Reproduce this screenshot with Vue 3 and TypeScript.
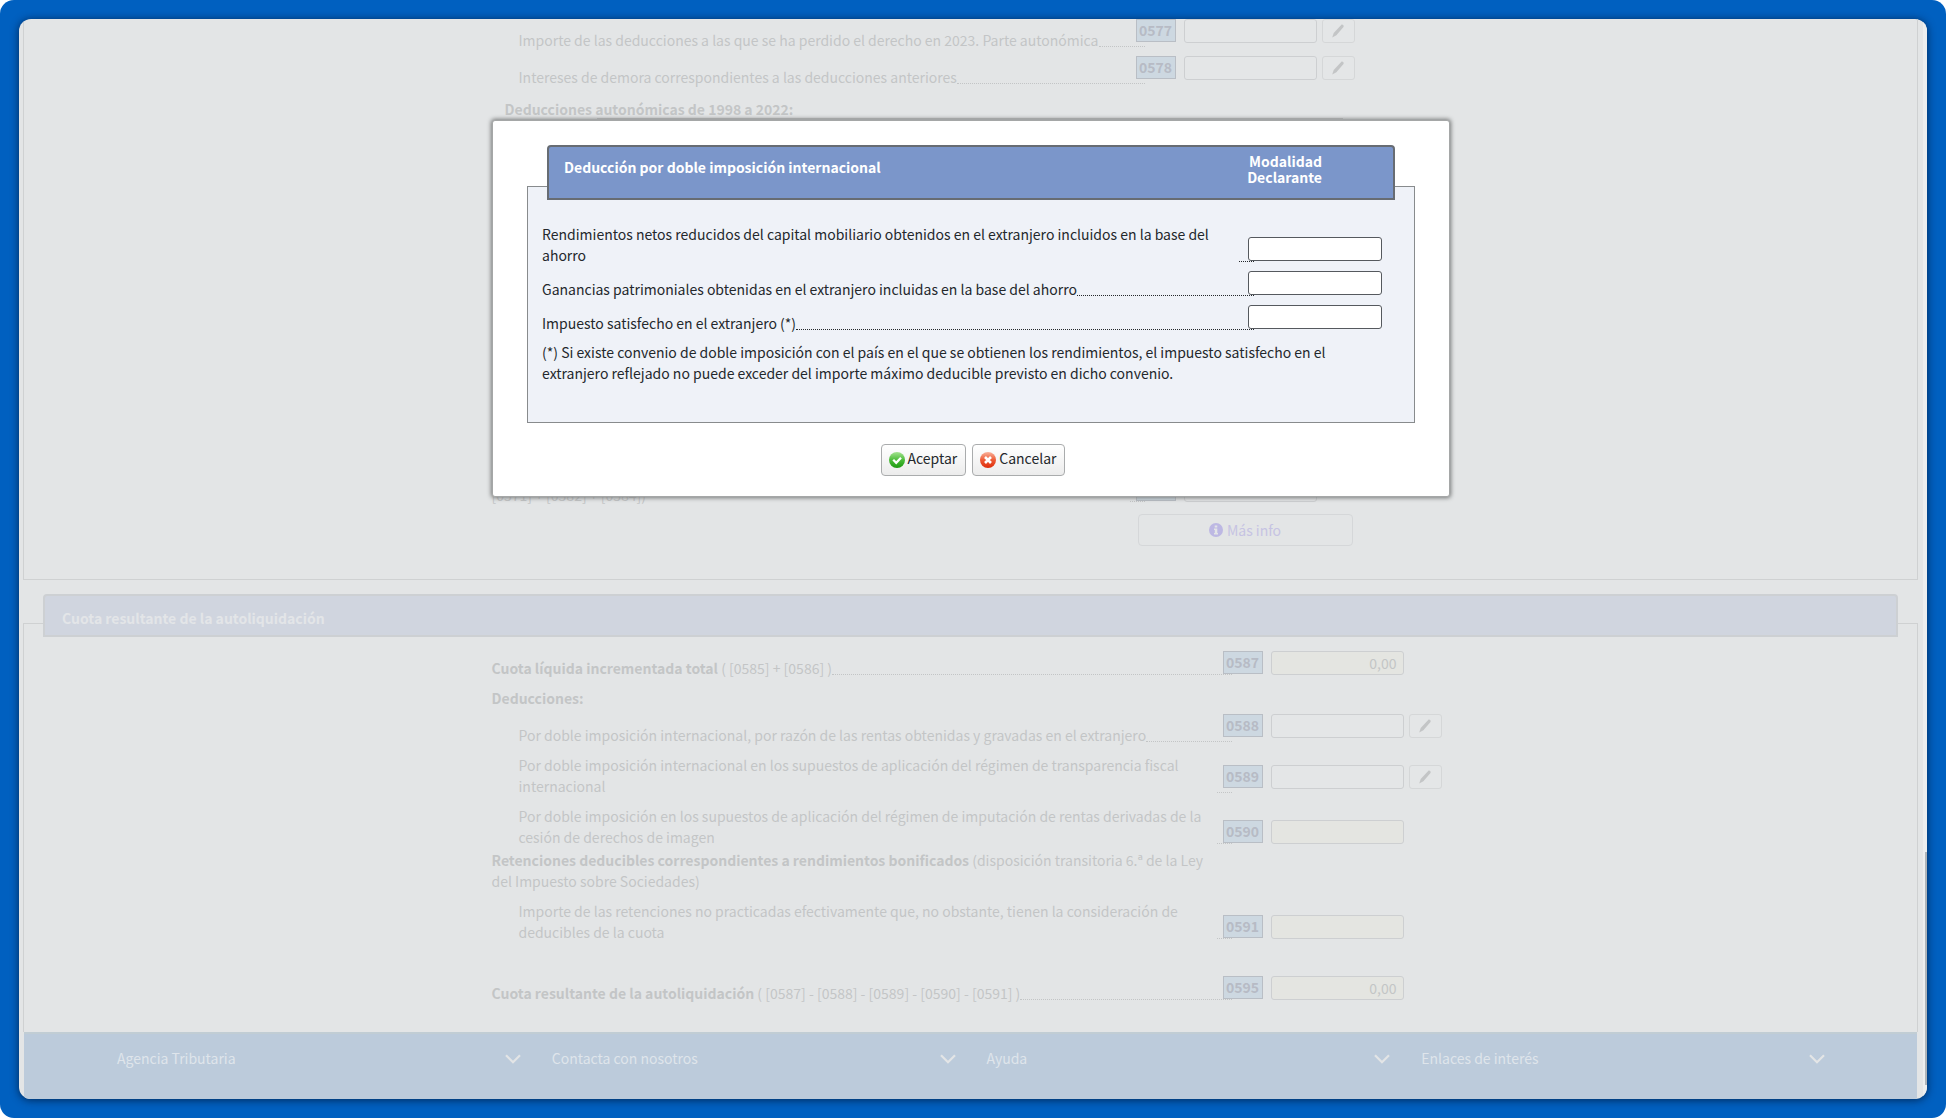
<script setup lang="ts">
import { ref } from 'vue'

interface TaxRow {
  id: string
  strong?: string
  text?: string
  code?: string
  value?: string
  editable?: boolean
  computed?: boolean
  indent?: boolean
  gap: 'none' | 'tight' | 'small' | 'regular' | 'large'
}

const lossRows: TaxRow[] = [
  { id: 'r0577', text: 'Importe de las deducciones a las que se ha perdido el derecho en 2023. Parte autonómica', code: '0577', editable: true, indent: true, gap: 'none' },
  { id: 'r0578', text: 'Intereses de demora correspondientes a las deducciones anteriores', code: '0578', editable: true, indent: true, gap: 'small' },
]

const resultRows: TaxRow[] = [
  { id: 'r0587', strong: 'Cuota líquida incrementada total', text: '( [0585] + [0586] )', code: '0587', value: '0,00', computed: true, gap: 'none' },
  { id: 'deducciones', strong: 'Deducciones:', gap: 'regular' },
  { id: 'r0588', text: 'Por doble imposición internacional, por razón de las rentas obtenidas y gravadas en el extranjero', code: '0588', editable: true, indent: true, gap: 'small' },
  { id: 'r0589', text: 'Por doble imposición internacional en los supuestos de aplicación del régimen de transparencia fiscal internacional', code: '0589', editable: true, indent: true, gap: 'regular' },
  { id: 'r0590', text: 'Por doble imposición en los supuestos de aplicación del régimen de imputación de rentas derivadas de la cesión de derechos de imagen', code: '0590', computed: true, indent: true, gap: 'regular' },
  { id: 'retenciones', strong: 'Retenciones deducibles correspondientes a rendimientos bonificados', text: '(disposición transitoria 6.ª de la Ley del Impuesto sobre Sociedades)', gap: 'tight' },
  { id: 'r0591', text: 'Importe de las retenciones no practicadas efectivamente que, no obstante, tienen la consideración de deducibles de la cuota', code: '0591', computed: true, indent: true, gap: 'regular' },
  { id: 'r0595', strong: 'Cuota resultante de la autoliquidación', text: '( [0587] - [0588] - [0589] - [0590] - [0591] )', code: '0595', value: '0,00', computed: true, gap: 'large' },
]

const dialogRows = ref([
  { id: 'rendimientos', text: 'Rendimientos netos reducidos del capital mobiliario obtenidos en el extranjero incluidos en la base del ahorro', value: '' },
  { id: 'ganancias', text: 'Ganancias patrimoniales obtenidas en el extranjero incluidas en la base del ahorro', value: '' },
  { id: 'impuesto', text: 'Impuesto satisfecho en el extranjero (*)', value: '' },
])

const footerMenus: string[] = ['Agencia Tributaria', 'Contacta con nosotros', 'Ayuda', 'Enlaces de interés']
</script>

<template>
  <div class="desktop">
    <div class="window">
      <main class="page">
        <section class="panel panel-first">
          <div class="column narrow">
            <div v-for="row in lossRows" :key="row.id" class="row" :class="['gap-' + row.gap, { indent: row.indent }]">
              <div class="line">
                <label class="label" :for="row.id">{{ row.text }}</label>
                <span class="leader"></span>
              </div>
              <span class="code">{{ row.code }}</span>
              <input :id="row.id" class="field" type="text" />
              <button type="button" class="edit" aria-label="Editar">
                <svg viewBox="0 0 14 14" width="14" height="14"><path d="M10.2.9c1.2-1 3 .5 2.3 2L5.4 11.2 1.2 13.4l1.5-4.5z" /></svg>
              </button>
            </div>
            <div class="row subhead"><strong>Deducciones autonómicas de 1998 a 2022:</strong></div>
            <div class="covered"></div>
            <div class="row">
              <div class="line">
                <label class="label filled" for="r0586">Cuota líquida autonómica incrementada<br />[0571] + [0582] + [0584])</label>
                <span class="leader"></span>
              </div>
              <span class="code">0586</span>
              <input id="r0586" class="field" type="text" />
            </div>
            <button type="button" class="info">
              <svg viewBox="0 0 14 14" width="14" height="14">
                <circle cx="7" cy="7" r="7" fill="#bdb8e3" />
                <path d="M5.7 2.4h2.6v2H5.7zM5 5.5h3.3v4.6H9v1.4H5v-1.4h.8V6.9H5z" fill="#e3e5e6" />
              </svg>
              Más info
            </button>
          </div>
        </section>

        <section class="panel panel-second">
          <h2 class="bar">Cuota resultante de la autoliquidación</h2>
          <div class="column wide">
            <div v-for="row in resultRows" :key="row.id" class="row" :class="['gap-' + row.gap, { indent: row.indent }]">
              <div class="line">
                <component :is="row.code ? 'label' : 'div'" class="label" :for="row.code ? row.id : undefined"><strong v-if="row.strong">{{ row.strong }}</strong>{{ row.strong && row.text ? ' ' : '' }}{{ row.text }}</component>
                <span class="leader" :class="{ blank: !row.code }"></span>
              </div>
              <template v-if="row.code">
                <span class="code">{{ row.code }}</span>
                <input :id="row.id" class="field" :class="{ computed: row.computed }" type="text" :value="row.value" :readonly="row.computed" />
              </template>
              <button v-if="row.editable" type="button" class="edit" aria-label="Editar">
                <svg viewBox="0 0 14 14" width="14" height="14"><path d="M10.2.9c1.2-1 3 .5 2.3 2L5.4 11.2 1.2 13.4l1.5-4.5z" /></svg>
              </button>
            </div>
          </div>
        </section>

        <footer class="footer">
          <button v-for="menu in footerMenus" :key="menu" type="button" class="menu">
            {{ menu }}
            <svg viewBox="0 0 16 10" width="16" height="10"><path d="M1 1.2l7 7 7-7" fill="none" stroke="#e3e5e6" stroke-width="2.2" /></svg>
          </button>
        </footer>
      </main>
      <div class="scrollbar"><div class="thumb"></div></div>

      <div class="overlay">
        <form class="dialog" role="dialog" aria-labelledby="dialog-title" @submit.prevent>
          <div class="sheet">
            <header class="dialog-bar">
              <h1 id="dialog-title">Deducción por doble imposición internacional</h1>
              <span class="mode">Modalidad<br />Declarante</span>
            </header>
            <div v-for="row in dialogRows" :key="row.id" class="dialog-row">
              <div class="line">
                <label class="label" :for="row.id">{{ row.text }}</label>
                <span class="leader"></span>
              </div>
              <input :id="row.id" v-model="row.value" class="dialog-field" type="text" />
            </div>
            <p class="note">(*) Si existe convenio de doble imposición con el país en el que se obtienen los rendimientos, el impuesto satisfecho en el extranjero reflejado no puede exceder del importe máximo deducible previsto en dicho convenio.</p>
          </div>
          <div class="actions">
            <button type="submit" class="action">
              <svg viewBox="0 0 16 16" width="16" height="16">
                <defs>
                  <linearGradient id="ok" x1="0" y1="0" x2="0" y2="1"><stop offset="0" stop-color="#a5e391" /><stop offset=".5" stop-color="#4cbc3a" /><stop offset="1" stop-color="#1c9a10" /></linearGradient>
                </defs>
                <circle cx="8" cy="8" r="8" fill="url(#ok)" />
                <path d="M4.2 7.8l3 3 4.8-5" fill="none" stroke="#fff" stroke-width="2.3" />
              </svg>
              Aceptar
            </button>
            <button type="button" class="action">
              <svg viewBox="0 0 16 16" width="16" height="16">
                <defs>
                  <linearGradient id="no" x1="0" y1="0" x2="0" y2="1"><stop offset="0" stop-color="#f9b29b" /><stop offset=".5" stop-color="#ee5a35" /><stop offset="1" stop-color="#dd2c0a" /></linearGradient>
                </defs>
                <circle cx="8" cy="8" r="8" fill="url(#no)" />
                <path d="M5 5l6 6M11 5l-6 6" fill="none" stroke="#fff" stroke-width="2.6" />
              </svg>
              Cancelar
            </button>
          </div>
        </form>
      </div>
    </div>
  </div>
</template>

<style>
body {
  background: #fff;
}
</style>

<style scoped>
* {
  box-sizing: border-box;
}

.desktop {
  display: flex;
  min-height: 100vh;
  padding: 19px;
  border-radius: 14px;
  background: #0060c0;
  font-family: "Noto Sans CJK SC", "Noto Sans", sans-serif;
  font-size: 14px;
  line-height: 21px;
  color: #c3c5c6;
}

button,
input {
  font: inherit;
  color: inherit;
}

.window {
  position: relative;
  display: flex;
  flex: 1;
  min-width: 0;
  border-radius: 12px;
  background: #e3e5e6;
  box-shadow: 0 1px 9px rgba(0, 20, 50, 0.75);
  overflow: hidden;
}

.page {
  display: flex;
  flex: 1;
  flex-direction: column;
  min-width: 0;
  padding: 0 5px 0 4px;
}

.scrollbar {
  display: flex;
  flex-direction: column;
  justify-content: flex-end;
  width: 4px;
  padding-bottom: 14px;
  background: #eceeef;
}

.thumb {
  height: 233px;
  border-right: 2px solid #aeb4b9;
}

.panel {
  border: 1px solid #cfd1d2;
}

.panel-first {
  border-top: 0;
  padding-bottom: 33px;
}

.panel-second {
  margin-top: 43px;
  padding-bottom: 28px;
  border-bottom: 0;
}

.bar {
  height: 43px;
  margin: -30px 19px 14px;
  padding: 0 17px;
  border: 2px solid #cdd0d3;
  border-radius: 4px 4px 0 0;
  background: #d0d5df;
  font-size: 14px;
  line-height: 44px;
  color: #e3e5e8;
}

.column {
  width: 958px;
  max-width: 100%;
  margin: 0 auto;
}

.row,
.dialog-row {
  display: flex;
  align-items: flex-end;
}

.gap-tight {
  margin-top: 2px;
}

.gap-small {
  margin-top: 5px;
}

.gap-regular {
  margin-top: 9px;
}

.gap-large {
  margin-top: 33px;
}

.subhead {
  margin-top: 11px;
  padding-left: 13px;
}

.line {
  display: flex;
  flex: none;
  align-items: flex-end;
}

.wide .line {
  width: 740px;
}

.narrow .line {
  width: 653px;
}

.indent .line {
  padding-left: 27px;
}

.filled {
  flex-basis: 100%;
}

.leader {
  flex: 1 0 15px;
  margin-bottom: 4px;
  border-bottom: 1px dotted currentColor;
}

.leader.blank {
  border-color: transparent;
}

.code {
  width: 40px;
  height: 23px;
  margin: 0 8px 5px -9px;
  border: 1px solid #b9bec5;
  background: #cdd8e1;
  font-weight: 700;
  text-align: center;
  color: #b7bbc5;
}

.field {
  width: 133px;
  height: 24px;
  margin-bottom: 4px;
  padding: 0 6px;
  border: 1px solid #cdcfd1;
  border-radius: 3px;
  background: #e4e6e7;
  text-align: right;
}

.field.computed {
  background: #e4e5e1;
}

.edit {
  display: flex;
  align-items: center;
  justify-content: center;
  width: 33px;
  height: 24px;
  margin: 0 0 8px 5px;
  padding: 0;
  border: 1px solid #d5d7d8;
  border-radius: 3px;
  background: #e4e6e7;
  fill: #c3c5c6;
}

.row:has(.edit) .field {
  margin-bottom: 8px;
}

.row:has(.edit) .code {
  margin-bottom: 9px;
}

.covered {
  height: 346px;
  margin: -2px 107px 0 105px;
  border-top: 1px solid #c3c5c6;
}

.info {
  display: flex;
  align-items: center;
  justify-content: center;
  gap: 4px;
  width: 215px;
  height: 32px;
  margin: 8px 0 0 646px;
  padding: 0;
  border: 1px solid #d5d7d9;
  border-radius: 4px;
  background: none;
  color: #c6c3e3;
}

.footer {
  display: grid;
  flex: 1;
  grid-template-columns: repeat(4, 1fr);
  align-items: start;
  margin: 0 1px;
  padding: 14px 61px 30px 93px;
  border-top: 2px solid #c1cdd4;
  background: #bccbdb;
}

.menu {
  display: flex;
  align-items: center;
  justify-content: space-between;
  padding: 0 31px 0 0;
  border: 0;
  background: none;
  color: #dfe5eb;
}

.overlay {
  position: absolute;
  inset: 0;
  display: flex;
  align-items: flex-start;
  justify-content: center;
  padding: 101px 4px 0 0;
}

.dialog {
  width: 958px;
  padding: 24px 34px 20px;
  border: 1px solid #a5a7a7;
  border-radius: 3px;
  background: #fff;
  box-shadow: 0 0 4px 1px #777979;
  color: #24282c;
}

.sheet {
  margin-top: 41px;
  padding: 0 31px 38px 14px;
  border: 1px solid #888b8d;
  background: #eff2f8;
}

.dialog-bar {
  display: flex;
  justify-content: space-between;
  height: 55px;
  margin: -42px -12px 24px 5px;
  padding: 6px 71px 0 15px;
  border: 2px solid #676c73;
  border-radius: 4px 4px 0 0;
  background: #7b96ca;
  color: #fff;
}

.dialog-bar h1 {
  margin: 4px 0 0;
  font-size: 14px;
}

.mode {
  font-weight: 700;
  line-height: 16px;
  text-align: right;
}

.dialog-row {
  margin-bottom: 5px;
}

.dialog-row .line {
  width: 712px;
}

.dialog-field {
  width: 134px;
  height: 24px;
  margin: 0 0 5px -6px;
  padding: 0 6px;
  border: 1px solid #55595e;
  border-radius: 3px;
  background: #fff;
  text-align: right;
}

.note {
  margin: 8px 0 0;
}

.actions {
  display: flex;
  justify-content: center;
  gap: 6px;
  margin-top: 21px;
  padding-left: 4px;
}

.action {
  display: flex;
  align-items: center;
  gap: 3px;
  height: 32px;
  padding: 0 8px 3px 7px;
  border: 1px solid #aaacad;
  border-radius: 4px;
  background: linear-gradient(#fff, #ececec);
}

.action svg {
  margin-top: 3px;
}
</style>
